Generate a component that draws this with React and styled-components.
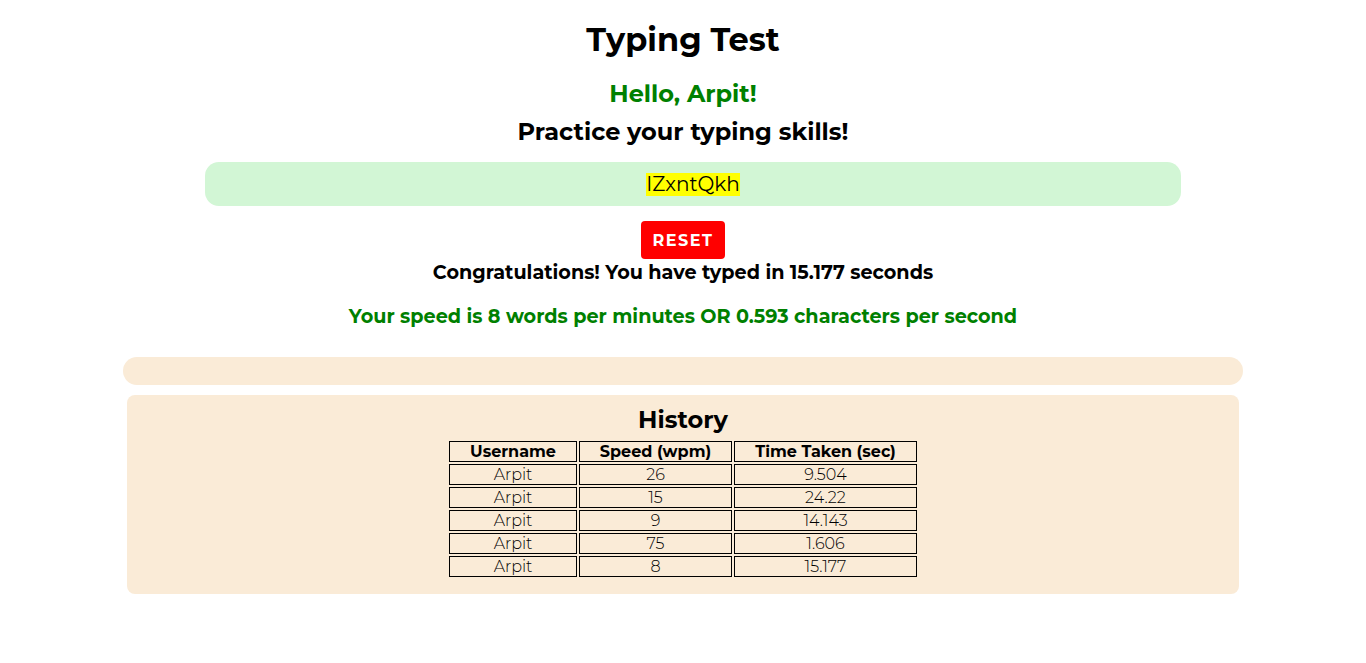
import styled, { createGlobalStyle } from "styled-components";

const history = [
  { user: "Arpit", speed: 26, time: "9.504" },
  { user: "Arpit", speed: 15, time: "24.22" },
  { user: "Arpit", speed: 9, time: "14.143" },
  { user: "Arpit", speed: 75, time: "1.606" },
  { user: "Arpit", speed: 8, time: "15.177" },
];

const App = () => {
  return (
    <>
      <GlobalStyle />
      <Page>
        <Title>Typing Test</Title>
        <Greeting>Hello, Arpit!</Greeting>
        <Subtitle>Practice your typing skills!</Subtitle>
        <WordBox>
          <Word>IZxntQkh</Word>
        </WordBox>
        <ResetButton>RESET</ResetButton>
        <Result>Congratulations! You have typed in 15.177 seconds</Result>
        <Speed>Your speed is 8 words per minutes OR 0.593 characters per second</Speed>
        <InputBar />
        <HistoryCard>
          <HistoryTitle>History</HistoryTitle>
          <Table>
            <thead>
              <tr>
                <Th $w={126}>Username</Th>
                <Th $w={151}>Speed (wpm)</Th>
                <Th $w={181}>Time Taken (sec)</Th>
              </tr>
            </thead>
            <tbody>
              {history.map((row, i) => (
                <tr key={i}>
                  <Td>{row.user}</Td>
                  <Td>{row.speed}</Td>
                  <Td>{row.time}</Td>
                </tr>
              ))}
            </tbody>
          </Table>
        </HistoryCard>
      </Page>
    </>
  );
};

const GlobalStyle = createGlobalStyle`
  body {
    margin: 0;
    background: #fff;
    font-family: "Montserrat", "Open Sans", sans-serif;
    color: #000;
  }
`;

const Page = styled.div`
  display: flex;
  flex-direction: column;
  align-items: center;
  padding-top: 20px;
`;

const Title = styled.h1`
  margin: 0;
  font-size: 32px;
  line-height: 40px;
  font-weight: 700;
`;

const Greeting = styled.h2`
  margin: 19px 0 0;
  font-size: 24px;
  line-height: 30px;
  font-weight: 700;
  color: #008000;
`;

const Subtitle = styled.h2`
  margin: 8px 0 0;
  font-size: 24px;
  line-height: 30px;
  font-weight: 700;
`;

const WordBox = styled.div`
  margin: 15px 0 0 20px;
  width: 976px;
  height: 44px;
  border-radius: 14px;
  background: #d2f6d5;
  display: flex;
  align-items: center;
  justify-content: center;
`;

const Word = styled.span`
  background: yellow;
  font-size: 20px;
  line-height: 23px;
`;

const ResetButton = styled.button`
  margin-top: 15px;
  width: 84px;
  height: 38px;
  border: none;
  border-radius: 4px;
  background: red;
  color: #fff;
  font-family: inherit;
  font-size: 16px;
  font-weight: 700;
  letter-spacing: 1.5px;
  cursor: pointer;
`;

const Result = styled.h3`
  margin: 0;
  font-size: 19.2px;
  line-height: 26px;
  font-weight: 700;
`;

const Speed = styled.h3`
  margin: 18px 0 0;
  font-size: 19.2px;
  line-height: 26px;
  font-weight: 700;
  color: #008000;
`;

const InputBar = styled.div`
  margin-top: 28px;
  width: 1120px;
  height: 28px;
  border-radius: 14px;
  background: antiquewhite;
`;

const HistoryCard = styled.div`
  margin-top: 10px;
  width: 1112px;
  box-sizing: border-box;
  padding: 10px 0 15px;
  border-radius: 8px;
  background: antiquewhite;
  display: flex;
  flex-direction: column;
  align-items: center;
`;

const HistoryTitle = styled.h2`
  margin: 0 0 4px;
  font-size: 24px;
  line-height: 30px;
  font-weight: 700;
`;

const Table = styled.table`
  table-layout: fixed;
  border-spacing: 2px;
  font-size: 16px;
`;

const Th = styled.th`
  width: ${(p) => p.$w}px;
  height: 19px;
  padding: 0;
  border: 1px solid #000;
  font-weight: 700;
  line-height: 19px;
`;

const Td = styled.td`
  height: 19px;
  padding: 0;
  border: 1px solid #000;
  text-align: center;
  font-weight: 300;
  line-height: 19px;
`;

export default App;
